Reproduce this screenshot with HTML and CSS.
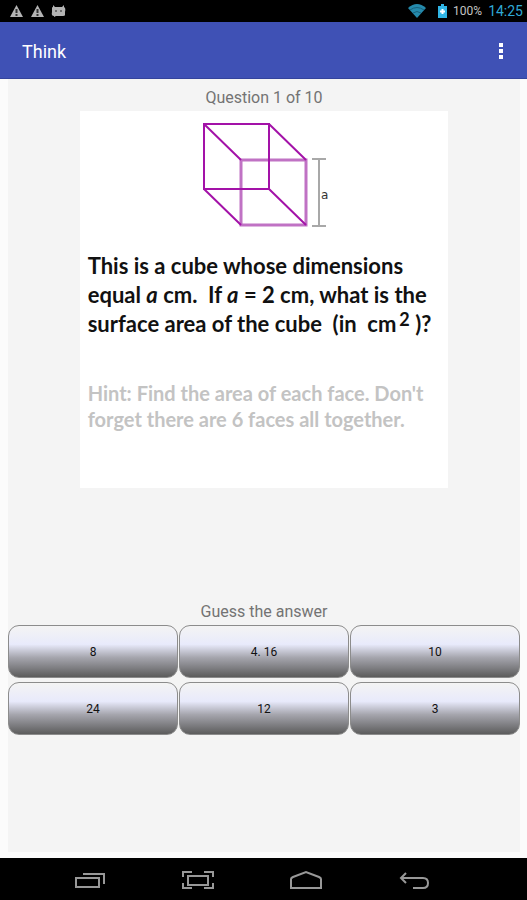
FILE: index.html
```html
<!DOCTYPE html>
<html lang="en">

<head>
    <meta charset="UTF-8">
    <meta name="viewport" content="width=device-width, initial-scale=1.0">
    <title>Think</title>
    <link rel="stylesheet" href="styles.css">
</head>

<body>
    <div class="status-bar">
        <div class="notifications">
            <svg width="15" height="14" viewBox="0 0 15 14">
                <path d="M7.500 1L14 13H1Z" fill="#b4b4b4" />
                <path d="M7.500 5v4M7.500 10v2" stroke="#333" stroke-width="2" />
            </svg>
            <svg width="15" height="14" viewBox="0 0 15 14">
                <path d="M7.500 1L14 13H1Z" fill="#b4b4b4" />
                <path d="M7.500 5v4M7.500 10v2" stroke="#333" stroke-width="2" />
            </svg>
            <svg width="15" height="14" viewBox="0 0 15 14">
                <path d="M2 1l2 2h7l2-2v2q2 1 1 5v3q0 1-2 1H5l-2 1v-1Q0 12 1 8V4q0-1 1-1Z" fill="#b4b4b4" />
                <circle cx="5" cy="7" r="1" fill="#555" />
                <circle cx="10" cy="7" r="1" fill="#555" />
            </svg>
        </div>
        <div class="system">
            <svg class="wifi" width="18" height="14" viewBox="0 0 18 14">
                <path d="M0 4Q9-4 18 4L9 14Z" fill="#258aac" />
                <path d="M2 6q7-5 14 0M5 9q4-3 8 0" fill="none" stroke="#17607c" />
            </svg>
            <svg class="battery" width="9" height="14" viewBox="0 0 9 14">
                <path d="M3 0h3v2h3v12H0V2h3Z" fill="#30b5e5" />
                <path d="M4.500 5v5M2 7.500h5" stroke="#fff" stroke-width="2" />
            </svg>
            <span class="percent">100%</span>
            <span class="clock">14:25</span>
        </div>
    </div>

    <header class="app-bar">
        <h1>Think</h1>
        <button class="menu" aria-label="More options">
            <svg width="4" height="16" viewBox="0 0 4 16" fill="#fff">
                <rect y="0" width="4" height="4" />
                <rect y="6" width="4" height="4" />
                <rect y="12" width="4" height="4" />
            </svg>
        </button>
    </header>

    <main>
        <div class="quiz">
            <p class="label">Question 1 of 10</p>
            <div class="card">
                <svg class="cube" width="134" height="112" viewBox="0 0 134 112">
                    <g fill="none" stroke="#c072c4" stroke-width="3">
                        <path d="M41 40h65v65H41Z" />
                    </g>
                    <g fill="none" stroke="#a312a8" stroke-width="2">
                        <path d="M4 4h65v65H4ZM4 4l37 36M69 4l37 36M69 69l37 36M4 69l37 36" />
                    </g>
                    <path d="M112 39h14M112 106h14M119 39v67" fill="none" stroke="#a8a8a8" stroke-width="2" />
                    <text class="side" x="121" y="79">a</text>
                </svg>
                <p class="question">This is a cube whose dimensions<br>equal <i>a</i> cm. &nbsp;If <i>a</i> = 2 cm, what is the<br>surface area of the cube &nbsp;(in &nbsp;cm<sup>2</sup> )?</p>
                <p class="hint">Hint: Find the area of each face. Don't<br>forget there are 6 faces all together.</p>
            </div>
            <p class="label">Guess the answer</p>
            <div class="answers">
                <button>8</button>
                <button>4. 16</button>
                <button>10</button>
                <button>24</button>
                <button>12</button>
                <button>3</button>
            </div>
        </div>
    </main>

    <nav class="nav-bar">
        <button aria-label="Recent apps">
            <svg width="32" height="20" viewBox="0 0 32 20">
                <path d="M2 8h23v9H2Z" />
                <path d="M9 4h21v10" />
            </svg>
        </button>
        <button aria-label="Screenshot">
            <svg width="32" height="20" viewBox="0 0 32 20">
                <path d="M6 6h20v9H6Z" />
                <path d="M1 7V2h9M22 2h9v5M31 13v5h-9M10 18H1v-5" />
            </svg>
        </button>
        <button aria-label="Home">
            <svg width="32" height="20" viewBox="0 0 32 20">
                <path d="M1 18V9q0-1 2-2l13-5 13 5q2 1 2 2v9Z" />
            </svg>
        </button>
        <button aria-label="Back">
            <svg width="32" height="20" viewBox="0 0 32 20">
                <path d="M8 3L3 8l5 5M3 8h22q5 0 5 5t-5 5H15" />
            </svg>
        </button>
    </nav>
</body>

</html>
```
FILE: styles.css
```css
* {
    box-sizing: border-box;
}

body {
    display: flex;
    flex-direction: column;
    min-height: 100vh;
    margin: 0;
    font-family: Roboto, sans-serif;
    background-color: #fbfbfb;
}

h1,
p {
    margin: 0;
}

button {
    font-family: inherit;
    cursor: pointer;
}

svg {
    display: block;
}

.status-bar {
    display: flex;
    justify-content: space-between;
    align-items: center;
    height: 22px;
    padding: 0 4px 0 9px;
    background: black;
}

.notifications {
    display: flex;
    gap: 6px;
}

.system {
    display: flex;
    align-items: center;
}

.battery {
    margin: 0 6px 0 12px;
}

.percent {
    margin-right: 6px;
    font-size: 12px;
    color: #c4c4c4;
}

.clock {
    font-size: 14px;
    color: #2fa9d6;
}

.app-bar {
    display: flex;
    justify-content: space-between;
    align-items: center;
    height: 57px;
    padding: 2px 12px 0 22px;
    background: #3f51b5;
    border-bottom: 1px solid #34449c;
}

.app-bar h1 {
    font-size: 18px;
    font-weight: normal;
    color: white;
}

.menu {
    padding: 12px;
    background: none;
    border: none;
}

main {
    display: flex;
    flex: 1;
    padding: 0 7px 6px 8px;
}

.quiz {
    flex: 1;
    padding-top: 8px;
    background: #f4f4f4;
}

.label {
    font-size: 16px;
    line-height: 22px;
    text-align: center;
    color: #737373;
}

.card {
    width: 72%;
    min-height: 377px;
    margin: 2px auto 113px;
    padding: 9px 0 0 8px;
    background: white;
}

.cube {
    margin-left: 112px;
}

.side {
    font-family: "DejaVu Sans", sans-serif;
    font-size: 12px;
    fill: #333;
}

.question {
    margin-top: 19px;
    font-family: Lato, sans-serif;
    font-size: 22px;
    font-weight: bold;
    line-height: 29px;
    color: #111;
    white-space: nowrap;
}

.question sup {
    margin-left: 3px;
    font-size: 18px;
    line-height: 0;
    vertical-align: 6px;
}

.hint {
    margin-top: 42px;
    font-family: Lato, sans-serif;
    font-size: 20px;
    font-weight: bold;
    line-height: 26px;
    color: #c3c3c3;
    white-space: nowrap;
}

.answers {
    display: grid;
    grid-template-columns: repeat(3, 1fr);
    gap: 4px 1px;
    margin-top: 2px;
}

.answers button {
    height: 53px;
    padding: 0;
    font-size: 12px;
    color: #111;
    background: linear-gradient(#f4f4f4, #e8eafb 36%, #a5a5ad 62%, #5c5c5c);
    border: 1px solid #8c8c8c;
    border-radius: 11px;
}

.nav-bar {
    display: flex;
    justify-content: center;
    align-items: center;
    gap: 76px;
    height: 42px;
    padding: 2px 24px 0 0;
    background: black;
}

.nav-bar button {
    padding: 0;
    background: none;
    border: none;
}

.nav-bar svg {
    fill: none;
    stroke: #989898;
    stroke-width: 2;
}
```
